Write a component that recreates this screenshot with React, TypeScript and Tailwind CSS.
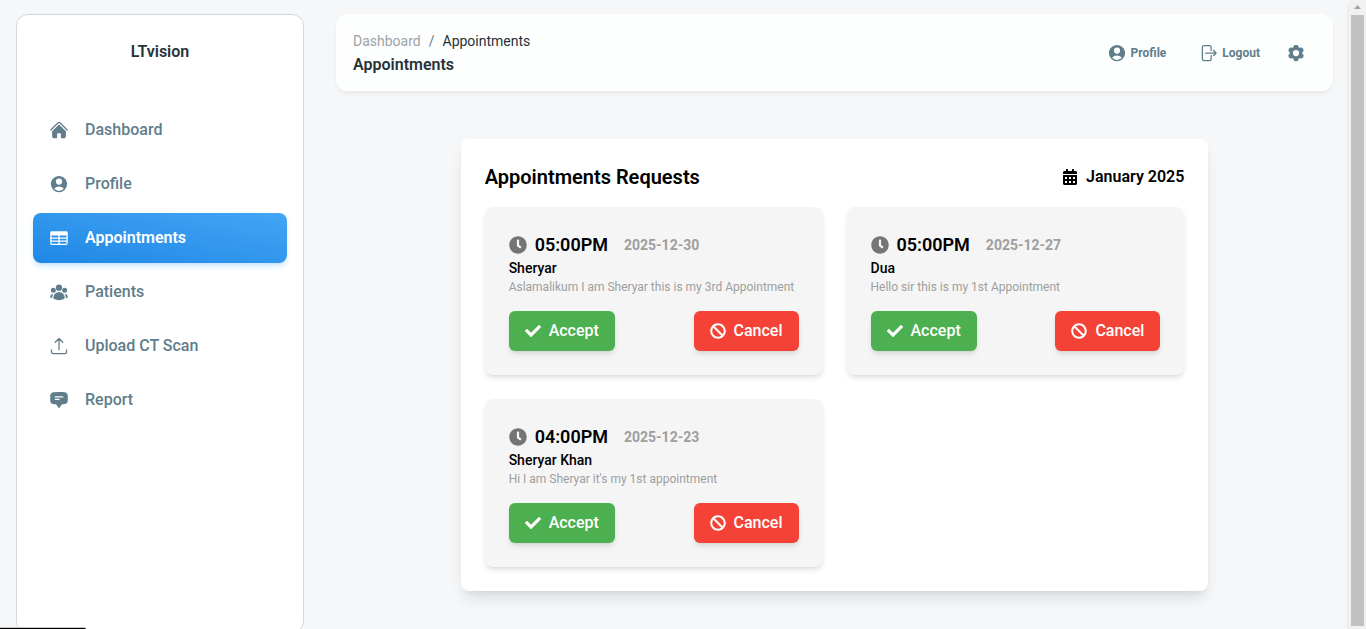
import React from "react";
import type { ComponentType } from "react";
import {
  HiHome,
  HiUserCircle,
  HiTableCells,
  HiUserGroup,
  HiChatBubbleBottomCenterText,
  HiCog6Tooth,
} from "react-icons/hi2";
import { FaBan, FaCalendarAlt, FaCheck, FaClock } from "react-icons/fa";

type IconProps = { className?: string };

function UploadIcon({ className }: IconProps) {
  return (
    <svg className={className} viewBox="0 0 24 24" fill="none" stroke="currentColor" strokeWidth="1.5" strokeLinecap="round" strokeLinejoin="round" aria-hidden="true">
      <path d="M3 16.5v2.25A2.25 2.25 0 0 0 5.25 21h13.5A2.25 2.25 0 0 0 21 18.75V16.5m-13.5-9L12 3m0 0 4.5 4.5M12 3v13.5" />
    </svg>
  );
}

function LogoutIcon({ className }: IconProps) {
  return (
    <svg className={className} viewBox="0 0 24 24" fill="none" stroke="currentColor" strokeWidth="1.5" strokeLinecap="round" strokeLinejoin="round" aria-hidden="true">
      <path d="M15.75 9V5.25A2.25 2.25 0 0 0 13.5 3h-6a2.25 2.25 0 0 0-2.25 2.25v13.5A2.25 2.25 0 0 0 7.5 21h6a2.25 2.25 0 0 0 2.25-2.25V15m3 0 3-3m0 0-3-3m3 3H9" />
    </svg>
  );
}

type NavItem = { label: string; icon: ComponentType<IconProps>; active?: boolean };

const navItems: NavItem[] = [
  { label: "Dashboard", icon: HiHome },
  { label: "Profile", icon: HiUserCircle },
  { label: "Appointments", icon: HiTableCells, active: true },
  { label: "Patients", icon: HiUserGroup },
  { label: "Upload CT Scan", icon: UploadIcon },
  { label: "Report", icon: HiChatBubbleBottomCenterText },
];

type Appointment = { time: string; date: string; name: string; message: string };

const appointments: Appointment[] = [
  { time: "05:00PM", date: "2025-12-30", name: "Sheryar", message: "Aslamalikum I am Sheryar this is my 3rd Appointment" },
  { time: "05:00PM", date: "2025-12-27", name: "Dua", message: "Hello sir this is my 1st Appointment" },
  { time: "04:00PM", date: "2025-12-23", name: "Sheryar Khan", message: "Hi I am Sheryar it's my 1st appointment" },
];

function Sidebar() {
  return (
    <aside className="-mb-1 ml-4 mt-3.5 w-72 shrink-0 rounded-xl border border-[#cfd8dc] bg-white px-4">
      <h1 className="pt-6 text-center text-base leading-[26px] font-semibold text-[#263238]">LTvision</h1>
      <nav className="mt-10">
        <ul className="flex flex-col gap-1">
          {navItems.map(({ label, icon: Icon, active }) => (
            <li key={label}>
              <a
                href="#"
                aria-current={active ? "page" : undefined}
                className={
                  active
                    ? "flex h-[50px] items-center gap-4 rounded-lg bg-linear-to-tr from-[#1e88e5] to-[#42a5f5] px-4 font-semibold text-white shadow-md shadow-[#2196f3]/20"
                    : "flex h-[50px] items-center gap-4 rounded-lg px-4 font-medium text-[#607d8b]"
                }
              >
                <Icon className="size-5" />
                <span className="leading-6">{label}</span>
              </a>
            </li>
          ))}
        </ul>
      </nav>
    </aside>
  );
}

function Header() {
  return (
    <header className="flex items-center justify-between rounded-xl border border-white/80 bg-white/80 px-4 pt-3.5 pb-[13px] shadow-md shadow-black/5">
      <div>
        <nav aria-label="Breadcrumb" className="flex gap-2 text-sm leading-6">
          <a href="#" className="text-[#9ca3a7]">Dashboard</a>
          <span className="text-[#607d8b]">/</span>
          <span className="text-[#263238]">Appointments</span>
        </nav>
        <h2 className="text-base leading-6 font-semibold text-[#263238]">Appointments</h2>
      </div>
      <div className="flex items-center text-xs font-bold text-[#607d8b]">
        <button type="button" className="flex items-center gap-1 px-4">
          <HiUserCircle className="size-5" />
          Profile
        </button>
        <button type="button" className="flex items-center gap-1 px-4">
          <LogoutIcon className="size-5" />
          Logout
        </button>
        <button type="button" aria-label="Settings" className="flex size-10 items-center justify-center">
          <HiCog6Tooth className="size-5" />
        </button>
      </div>
    </header>
  );
}

function AppointmentCard({ time, date, name, message }: Appointment) {
  return (
    <article className="rounded-lg bg-[#f5f5f5] p-6 shadow-md">
      <div className="flex items-center pt-0.5">
        <FaClock className="mr-2 size-[18px] text-[#757575]" />
        <span className="text-lg leading-6 font-semibold">{time}</span>
        <span className="ml-4 text-sm leading-6 font-bold text-[#9e9e9e]">{date}</span>
      </div>
      <h4 className="text-sm leading-[22px] font-medium">{name}</h4>
      <p className="text-xs leading-4 text-[#9e9e9e]">{message}</p>
      <div className="mt-4 flex justify-between text-base leading-6 font-medium text-white">
        <button type="button" className="flex items-center gap-2 rounded-md bg-[#4caf50] px-4 py-2 shadow-md">
          <FaCheck className="size-4" />
          Accept
        </button>
        <button type="button" className="flex items-center gap-2 rounded-md bg-[#f44336] px-4 py-2 shadow-md">
          <FaBan className="size-4" />
          Cancel
        </button>
      </div>
    </article>
  );
}

function ScrollRail() {
  return (
    <div aria-hidden="true" className="flex w-[17px] shrink-0 flex-col items-center bg-[#f1f1f1] pb-[3px] shadow-md">
      <svg className="h-[15px] w-[17px] shrink-0" viewBox="0 0 17 15">
        <path d="M5 9h7L8.500 5z" fill="#a3a3a3" />
      </svg>
      <div className="w-[13px] grow bg-[#c1c1c1]" />
    </div>
  );
}

export default function App() {
  return (
    <div className="relative flex h-screen overflow-hidden bg-[#f5f7f9] font-['Roboto',sans-serif] text-black">
      <Sidebar />
      <main className="min-w-0 grow pt-3.5 pr-4 pl-8">
        <Header />
        <section className="mx-auto mt-12 w-3/4 rounded-lg bg-white p-6 shadow-lg">
          <div className="flex items-center justify-between">
            <h3 className="text-xl leading-7 font-semibold">Appointments Requests</h3>
            <p className="flex items-center gap-2 text-base leading-6 font-semibold">
              <FaCalendarAlt className="size-4" />
              January 2025
            </p>
          </div>
          <div className="mt-4 grid grid-cols-2 gap-6">
            {appointments.map((item) => (
              <AppointmentCard key={item.date} {...item} />
            ))}
          </div>
        </section>
      </main>
      <ScrollRail />
      <div aria-hidden="true" className="absolute bottom-0 left-0 h-0.5 w-[86px] rounded-tr-xs border-t border-[#c4c7ca] bg-black" />
    </div>
  );
}
